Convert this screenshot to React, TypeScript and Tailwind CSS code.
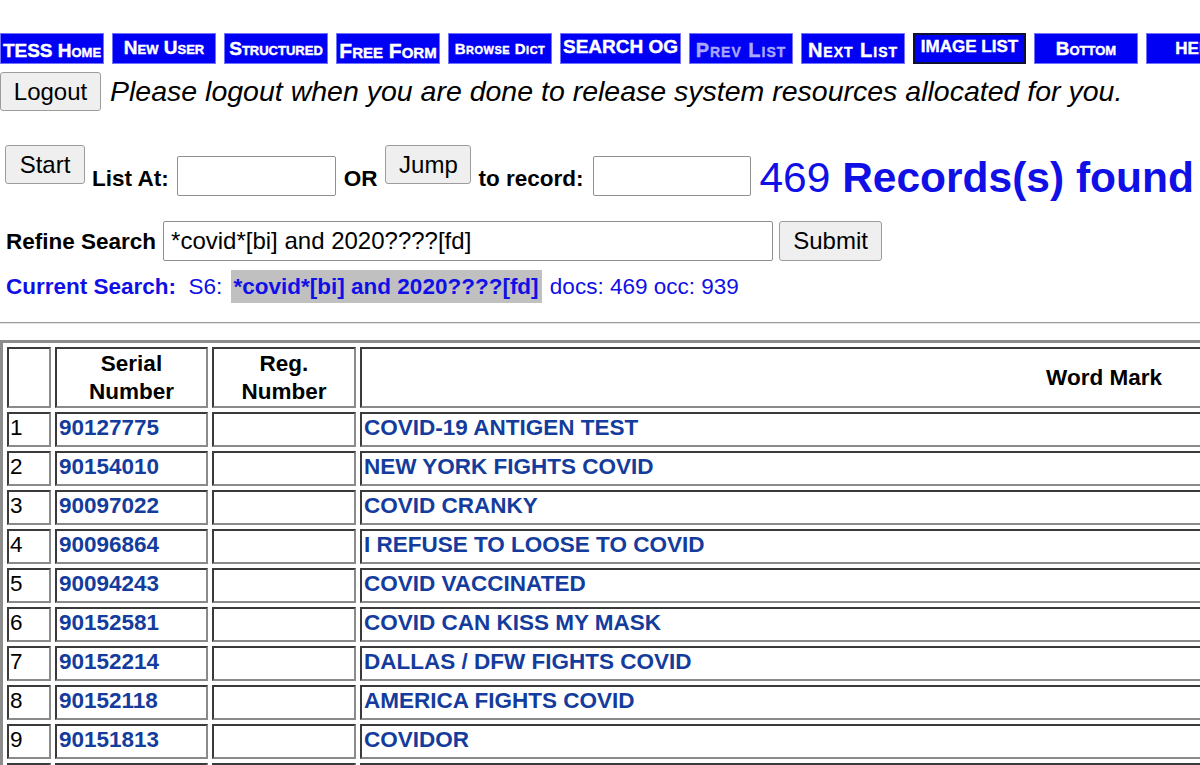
import React from "react";

type NavItem = { label: string; w: string; cls: string };

const NAV: NavItem[] = [
  { label: "TESS Home", w: "w-[104px]", cls: "text-[19px] [font-variant-caps:small-caps] pt-[4px]" },
  { label: "New User", w: "w-[104px]", cls: "text-[19px] [font-variant-caps:small-caps] pb-[2px]" },
  { label: "Structured", w: "w-[104px]", cls: "text-[19px] [font-variant-caps:small-caps]" },
  { label: "Free Form", w: "w-[104px]", cls: "text-[21px] [font-variant-caps:small-caps] pt-[4px]" },
  { label: "Browse Dict", w: "w-[104px]", cls: "text-[15px] tracking-[0.5px] [font-variant-caps:small-caps]" },
  { label: "SEARCH OG", w: "w-[121px]", cls: "text-[19px] pb-[4px]" },
  { label: "Prev List", w: "w-[104px]", cls: "text-[20px] tracking-[1px] [font-variant-caps:small-caps] text-[#a8a8ff] pt-[3px]" },
  { label: "Next List", w: "w-[104px]", cls: "text-[20px] tracking-[1px] [font-variant-caps:small-caps] pt-[3px]" },
  { label: "IMAGE LIST", w: "w-[113px] border-2 border-[#101030]", cls: "text-[17px] pb-[4px]" },
  { label: "Bottom", w: "w-[104px]", cls: "text-[19px] [font-variant-caps:small-caps]" },
  { label: "HELP", w: "w-[104px]", cls: "text-[17px]" },
];

const ROWS = [
  ["1", "90127775", "COVID-19 ANTIGEN TEST"],
  ["2", "90154010", "NEW YORK FIGHTS COVID"],
  ["3", "90097022", "COVID CRANKY"],
  ["4", "90096864", "I REFUSE TO LOOSE TO COVID"],
  ["5", "90094243", "COVID VACCINATED"],
  ["6", "90152581", "COVID CAN KISS MY MASK"],
  ["7", "90152214", "DALLAS / DFW FIGHTS COVID"],
  ["8", "90152118", "AMERICA FIGHTS COVID"],
  ["9", "90151813", "COVIDOR"],
  ["10", "", ""],
];

const BTN = "flex-none h-[39px] bg-[#efefef] border border-[#9c9c9c] rounded-[3px] text-[24px] leading-none text-black";
const INPUT = "flex-none h-[40px] bg-white border border-[#8f8f8f] rounded-[2px] px-[7px] text-[24px] text-black outline-none";
const LABEL = "flex-none font-bold leading-[26px]";
const CELL = "border-2 border-t-[#3a3a3a] border-l-[#3a3a3a] border-r-[#8a8a8a] border-b-[#8a8a8a] px-[2px] py-0 leading-[26px]";
const TD = `${CELL} pb-[3px]`;
const LINK = "font-bold text-[#143c9c]";

export default function App() {
  return (
    <div className="w-[1200px] h-[765px] overflow-hidden bg-white text-black font-['Liberation_Sans',Arial,sans-serif] text-[22.5px]">
      {/* nav strip */}
      <div className="flex gap-[8px] pt-[33px] whitespace-nowrap">
        {NAV.map((n) => (
          <div
            key={n.label}
            className={`flex-none h-[31px] flex items-center justify-center bg-[#0000f5] border border-[#7373ff] text-white font-bold leading-none [-webkit-text-stroke:0.4px] ${n.w}`}
          >
            <span className={n.cls}>{n.label}</span>
          </div>
        ))}
      </div>

      {/* logout */}
      <div className="flex items-center gap-[9px] mt-[8px] whitespace-nowrap">
        <button className={`${BTN} w-[101px]`}>Logout</button>
        <span className="italic text-[28.5px] leading-none">
          Please logout when you are done to release system resources allocated for you.
        </span>
      </div>

      {/* list at / jump */}
      <div className="flex items-start gap-[7px] mt-[34px] pl-[5px] h-[50px] whitespace-nowrap">
        <button className={`${BTN} w-[80px]`}>Start</button>
        <span className={`${LABEL} mt-[21px]`}>List At:</span>
        <input className={`${INPUT} w-[159px] mt-[11px] ml-[1px]`} />
        <span className={`${LABEL} mt-[21px] ml-[1px]`}>OR</span>
        <button className={`${BTN} w-[86px] ml-[1px]`}>Jump</button>
        <span className={`${LABEL} mt-[21px]`}>to record:</span>
        <input className={`${INPUT} w-[158px] mt-[11px] ml-[3px]`} />
        <span className="flex-none mt-[9px] ml-[1px] text-[42.5px] leading-[48px] text-[#1010e6]">
          469 <b>Records(s) found</b>
        </span>
      </div>

      {/* refine */}
      <div className="flex items-start gap-[7px] mt-[26px] pl-[6px] whitespace-nowrap">
        <span className={`${LABEL} mt-[8px]`}>Refine Search</span>
        <input className={`${INPUT} w-[610px]`} defaultValue="*covid*[bi] and 2020????[fd]" />
        <button className={`${BTN} h-[40px] w-[103px] ml-[-1px]`}>Submit</button>
      </div>

      {/* current search */}
      <div className="flex items-center h-[33px] mt-[9px] pl-[6px] whitespace-pre text-[#1010e6]">
        <b>Current Search:  </b>
        <span>S6: </span>
        <b className="h-full leading-[33px] bg-[#c0c0c0] ml-[2px] px-[3px]">*covid*[bi] and 2020????[fd]</b>
        <span className="ml-[2px]"> docs: 469 occ: 939</span>
      </div>

      <hr className="mt-[19px] border-0 border-t border-b border-t-[#9a9a9a] border-b-[#e4e4e4]" />

      {/* results */}
      <table className="mt-[16px] w-[1855px] table-fixed border-separate border-spacing-[4px] border-[3px] border-t-[#8c8c8c] border-l-[#8c8c8c] border-r-[#555] border-b-[#555]">
        <thead>
          <tr className="h-[61px]">
            <th className={`${CELL} w-[44px]`}></th>
            <th className={`${CELL} w-[153px] leading-[28px]`}>Serial<br />Number</th>
            <th className={`${CELL} w-[144px] leading-[28px]`}>Reg.<br />Number</th>
            <th className={`${CELL}`}>Word Mark</th>
          </tr>
        </thead>
        <tbody>
          {ROWS.map(([n, serial, mark]) => (
            <tr key={n} className="h-[35px]">
              <td className={`${TD} pl-[1px]`}>{n}</td>
              <td className={TD}><span className={LINK}>{serial}</span></td>
              <td className={TD}></td>
              <td className={TD}><span className={LINK}>{mark}</span></td>
            </tr>
          ))}
        </tbody>
      </table>
    </div>
  );
}
